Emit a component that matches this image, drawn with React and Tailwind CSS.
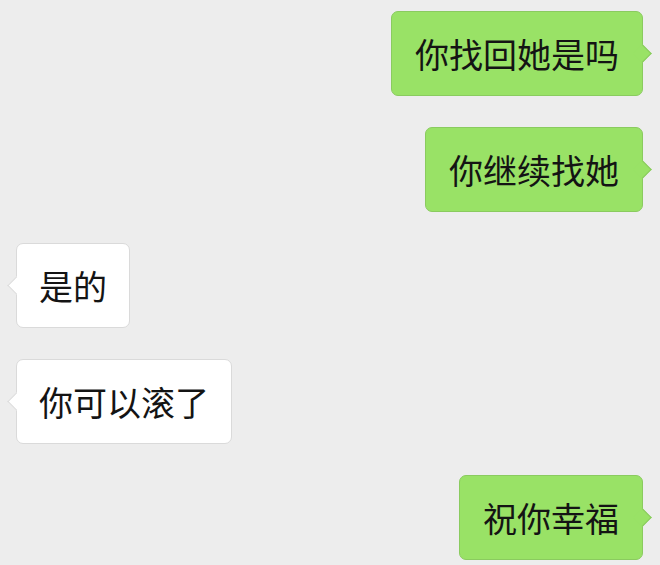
import React from "react";

const msgs = [
  { side: "right", text: "你找回她是吗" },
  { side: "right", text: "你继续找她" },
  { side: "left", text: "是的" },
  { side: "left", text: "你可以滚了" },
  { side: "right", text: "祝你幸福" },
];

function Bubble({ side, text }) {
  const right = side === "right";
  return (
    <div className={right ? "flex justify-end pr-[17px]" : "flex justify-start pl-[16px]"}>
      <div
        className={
          right
            ? "relative h-[85px] flex items-center px-[23px] rounded-[7px] border border-[#8acb5f] bg-[#99e266]"
            : "relative h-[85px] flex items-center px-[22px] rounded-[7px] border border-[#dadada] bg-white"
        }
      >
        <div
          className={
            right
              ? "absolute top-1/2 -right-[7px] -mt-[7px] w-[13px] h-[13px] rotate-45 bg-[#99e266] border-t border-r border-[#8acb5f]"
              : "absolute top-1/2 -left-[7px] -mt-[7px] w-[13px] h-[13px] rotate-45 bg-white border-b border-l border-[#dadada]"
          }
        />
        <span className="relative text-[34px] leading-none text-[#141414] font-['Noto_Sans_CJK_SC',sans-serif]">
          {text}
        </span>
      </div>
    </div>
  );
}

export default function App() {
  return (
    <div className="w-[660px] h-[565px] bg-[#ededed] overflow-hidden flex flex-col gap-[31px] pt-[11px]">
      {msgs.map((m, i) => (
        <Bubble key={i} {...m} />
      ))}
    </div>
  );
}
